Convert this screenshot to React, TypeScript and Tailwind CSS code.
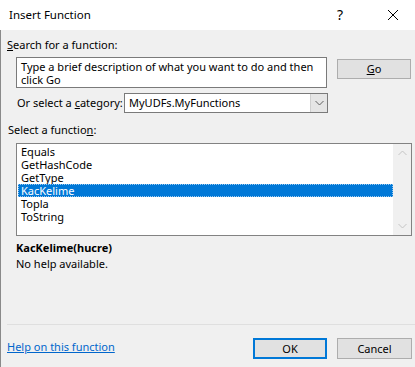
import React from "react";

const items = ["Equals", "GetHashCode", "GetType", "KacKelime", "Topla", "ToString"];

function Chevron({ up, className }: { up?: boolean; className?: string }) {
  return (
    <svg width="9" height="6" viewBox="0 0 9 6" className={className}>
      <path
        d={up ? "M0.5 5 L4.5 1 L8.5 5" : "M0.5 1 L4.5 5 L8.5 1"}
        fill="none"
        stroke="currentColor"
        strokeWidth="1"
      />
    </svg>
  );
}

export default function App() {
  return (
    <div
      className="relative w-[415px] h-[367px] overflow-hidden bg-[#f0f0f0] text-[11px] leading-[16px] text-black"
      style={{ fontFamily: '"Noto Sans", "Open Sans", sans-serif' }}
    >
      <div className="flex h-[30px] items-center bg-white pl-[9px]">
        <span className="text-[11.5px]">Insert Function</span>
        <span className="ml-auto mr-[44px] text-[14px]">?</span>
        <svg width="12" height="12" viewBox="0 0 12 12" className="mr-[16px]">
          <path d="M1 1 L11 11 M11 1 L1 11" stroke="#000" strokeWidth="1" />
        </svg>
      </div>
      <div className="flex h-[337px] flex-col border-l border-[#8a8a8a]">
        <div className="mt-[7px] pl-[6px]">
          <span className="underline">S</span>earch for a function:
        </div>
        <div className="mt-[4px] flex">
          <div className="ml-[15px] h-[31px] w-[311px] border border-[#7a7a7a] bg-white pl-[4px] pt-[2px] leading-[13px]">
            Type a brief description of what you want to do and then click Go
          </div>
          <button className="ml-[10px] mt-[2px] h-[20px] w-[74px] border border-[#adadad] bg-[#e1e1e1] leading-[16px]">
            <span className="underline">G</span>o
          </button>
        </div>
        <div className="mt-[5px] flex h-[20px] items-center">
          <span className="ml-[16px] shrink-0 whitespace-nowrap">
            Or select a <span className="underline">c</span>ategory:
          </span>
          <div className="ml-auto mr-[87px] flex h-[20px] w-[204px] shrink-0 border border-[#7a7a7a] bg-white">
            <span className="pl-[4px] leading-[18px]">MyUDFs.MyFunctions</span>
            <div className="ml-auto flex h-[18px] w-[17px] items-center justify-center border-l border-[#cfcfcf] bg-[#e5e5e5] text-[#606060]">
              <Chevron />
            </div>
          </div>
        </div>
        <div className="mt-[9px] pl-[7px]">
          Select a functio<span className="underline">n</span>:
        </div>
        <div className="ml-[15px] mt-[5px] flex h-[93px] w-[396px] border border-[#828282] bg-white">
          <div className="flex flex-1 flex-col pl-[1px] pt-[1px]">
            {items.map((it) => (
              <div
                key={it}
                className={
                  it === "KacKelime"
                    ? "h-[13px] border border-dotted border-[#99c9ef] bg-[#0078d7] pl-[2px] leading-[11px] text-white"
                    : "h-[13px] pl-[3px] leading-[13px]"
                }
              >
                {it}
              </div>
            ))}
          </div>
          <div className="flex w-[18px] flex-col items-center justify-between bg-[#f0f0f0] py-[6px] text-[#c4c4c4]">
            <Chevron up />
            <Chevron />
          </div>
        </div>
        <div className="mt-[4px] pl-[15px] font-bold">KacKelime(hucre)</div>
        <div className="pl-[15px]">No help available.</div>
        <div className="ml-[6px] mt-[52px] h-px bg-[#dfdfdf]" />
        <div className="mt-[13px] flex items-start">
          <a className="ml-[6px] mt-[1px] text-[#0066cc] underline">Help on this function</a>
          <button className="ml-auto h-[21px] w-[74px] border-2 border-[#0078d7] bg-[#e1e1e1] leading-[16px]">
            OK
          </button>
          <button className="ml-[10px] mr-[3px] h-[21px] w-[75px] border border-[#adadad] bg-[#e1e1e1] leading-[16px]">
            Cancel
          </button>
        </div>
      </div>
    </div>
  );
}
